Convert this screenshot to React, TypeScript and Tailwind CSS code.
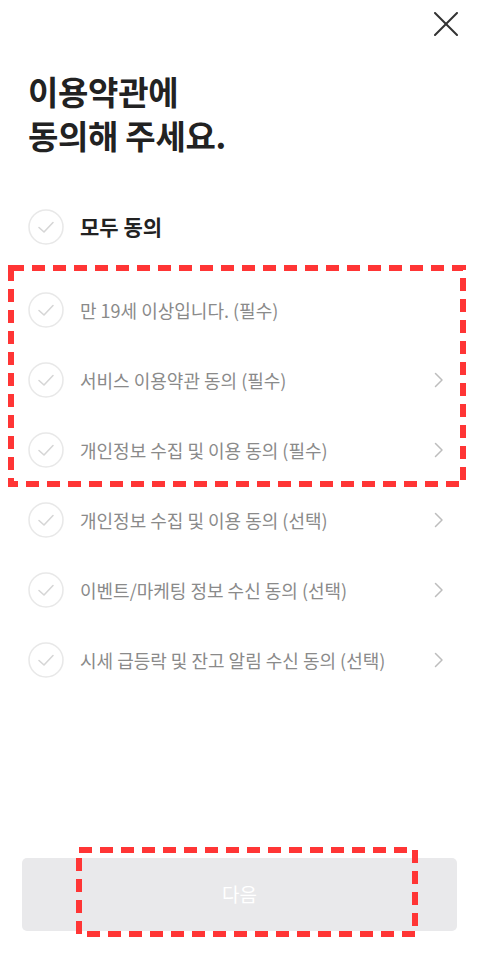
import React from 'react';

const terms = [
  { label: '만 19세 이상입니다. (필수)', arrow: false },
  { label: '서비스 이용약관 동의 (필수)', arrow: true },
  { label: '개인정보 수집 및 이용 동의 (필수)', arrow: true },
  { label: '개인정보 수집 및 이용 동의 (선택)', arrow: true },
  { label: '이벤트/마케팅 정보 수신 동의 (선택)', arrow: true },
  { label: '시세 급등락 및 잔고 알림 수신 동의 (선택)', arrow: true },
];

const CheckCircle = () => (
  <svg width="36" height="36" viewBox="0 0 36 36" className="shrink-0">
    <circle cx="18" cy="18" r="17" fill="none" stroke="#e8e8e8" strokeWidth="1.5" />
    <polyline points="11,18.5 16,23 25,13.5" fill="none" stroke="#d6d6d6" strokeWidth="1.6" strokeLinecap="round" strokeLinejoin="round" />
  </svg>
);

const Chevron = () => (
  <svg width="10" height="16" viewBox="0 0 10 16" className="shrink-0">
    <polyline points="1.5,1.5 8,8 1.5,14.5" fill="none" stroke="#bdbdbd" strokeWidth="1.5" strokeLinecap="round" strokeLinejoin="round" />
  </svg>
);

const DashedBox = ({ className, w, h }: { className: string; w: number; h: number }) => (
  <div className={`absolute pointer-events-none ${className}`}>
    <svg width={w} height={h} viewBox={`0 0 ${w} ${h}`}>
      <rect x="3" y="3" width={w - 6} height={h - 6} fill="none" stroke="#ff3535" strokeWidth="6" strokeDasharray="13 8" />
    </svg>
  </div>
);

export default function App() {
  return (
    <div
      className="relative w-[479px] h-[957px] bg-white flex flex-col overflow-hidden"
      style={{ fontFamily: '"Noto Sans CJK KR", "Noto Sans", sans-serif' }}
    >
      <div className="flex justify-end pt-[12px] pr-[21px]">
        <svg width="24" height="24" viewBox="0 0 24 24">
          <line x1="1" y1="1" x2="23" y2="23" stroke="#333" strokeWidth="2" strokeLinecap="round" />
          <line x1="23" y1="1" x2="1" y2="23" stroke="#333" strokeWidth="2" strokeLinecap="round" />
        </svg>
      </div>

      <h1 className="mt-[33px] pl-[28px] text-[33px] leading-[44px] font-bold text-[#222] tracking-[-0.3px]">
        이용약관에
        <br />
        동의해 주세요.
      </h1>

      <div className="mt-[35px] flex flex-col">
        <div className="h-[70px] flex items-center pl-[28px] pr-[35px] gap-[16px]">
          <CheckCircle />
          <span className="text-[21px] font-bold text-[#222]">모두 동의</span>
        </div>
        <div className="h-[13px]" />
        {terms.map((t) => (
          <div key={t.label} className="h-[70px] flex items-center pl-[28px] pr-[35px] gap-[16px]">
            <CheckCircle />
            <span className="flex-1 text-[18px] text-[#8a8a8a]">{t.label}</span>
            {t.arrow && <Chevron />}
          </div>
        ))}
      </div>

      <div className="mt-auto px-[22px] pb-[26px]">
        <button className="w-full h-[73px] rounded-[5px] bg-[#e9e9eb] text-white text-[19px] flex items-center justify-center">
          다음
        </button>
      </div>

      <DashedBox className="left-[8px] top-[265px]" w={458} h={222} />
      <DashedBox className="left-[76px] top-[847px]" w={342} h={90} />
    </div>
  );
}
